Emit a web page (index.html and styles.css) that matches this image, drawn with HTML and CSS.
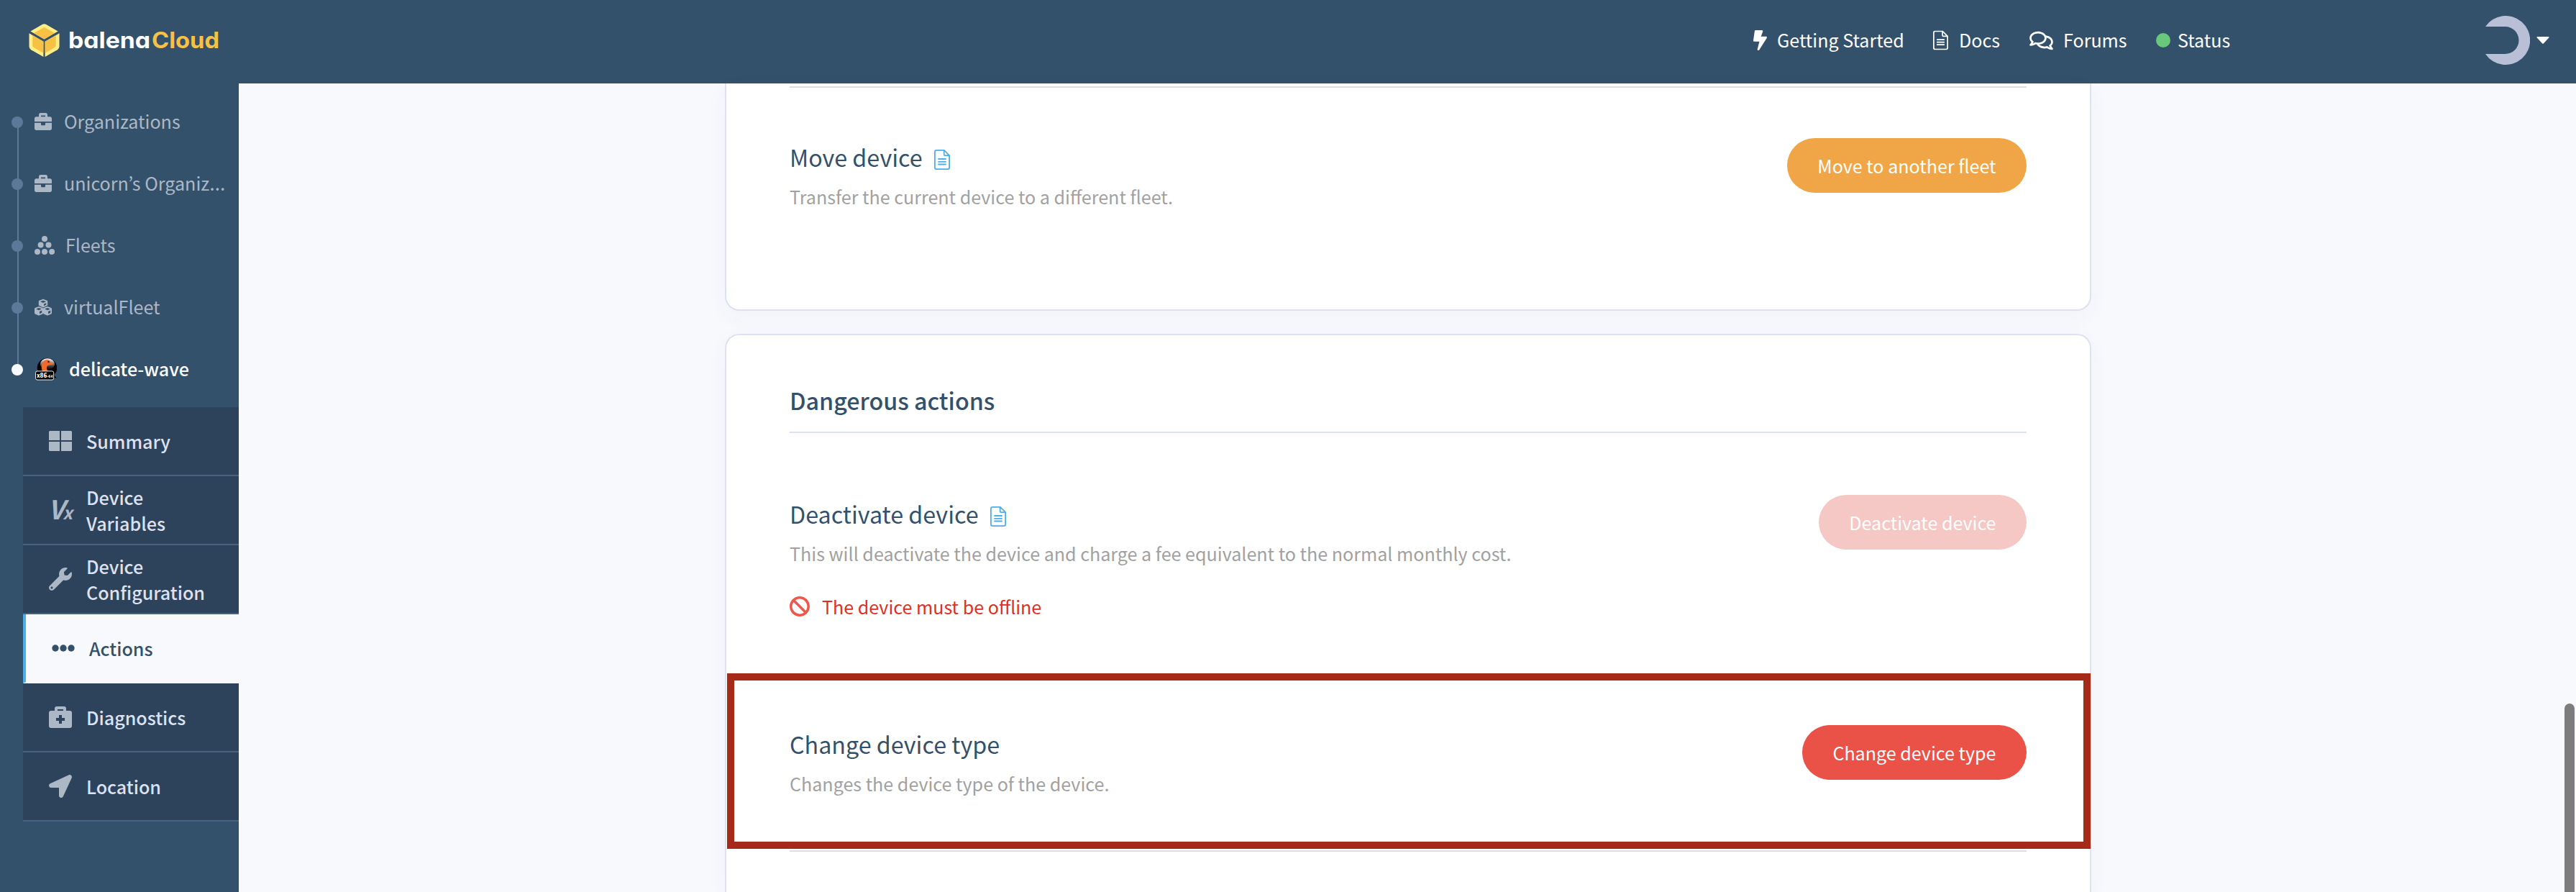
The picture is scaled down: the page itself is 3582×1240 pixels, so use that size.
FILE: index.html
```html
<!DOCTYPE html>
<html lang="en">
<head>
<meta charset="utf-8">
<title>balenaCloud - Device actions</title>
<link rel="stylesheet" href="styles.css">
</head>
<body>
<svg class="defs" aria-hidden="true">
  <symbol id="i-briefcase" viewBox="0 32 512 448" preserveAspectRatio="none"><path d="M320 336c0 8.84-7.16 16-16 16h-96c-8.84 0-16-7.16-16-16v-48H0v144c0 25.6 22.4 48 48 48h416c25.6 0 48-22.4 48-48V288H320v48zm144-208h-80V80c0-25.6-22.4-48-48-48H176c-25.6 0-48 22.4-48 48v48H48c-25.6 0-48 22.4-48 48v80h512v-80c0-25.6-22.4-48-48-48zm-144 0H192V96h128v32z"/></symbol>
  <symbol id="i-file" viewBox="0 0 22 28"><path d="M2.900.9H14L21.100 8V25.100Q21.100 27.100 19.100 27.100H2.900Q.9 27.100.9 25.100V2.900Q.9.9 2.900.9ZM13.700 1V7Q13.700 8.200 14.900 8.200H21" fill="none" stroke="currentColor" stroke-width="1.800"/><path d="M5.300 13H16.700M5.300 16.800H16.700M5.300 20.500H16.700" fill="none" stroke="currentColor" stroke-width="1.800"/></symbol>
</svg>

<header class="topbar">
  <a class="brand">
    <svg class="brand-cube" width="43" height="46" viewBox="0 0 43 46">
      <g fill="#ffed85"><path d="M18.800.9Q21.500-.5 24.200.9L40.600 10.400 21.500 21.500 2.400 10.400Z"/><path d="M.5 13.300 20.400 24.800V46L3.200 36.200Q.5 34.500.5 31.500Z"/><path d="M42.500 13.300 22.600 24.800V46L39.800 36.200Q42.500 34.500 42.500 31.500Z"/></g>
      <g fill="#f7c244"><path d="M19.500 5.900Q21.500 4.800 23.500 5.900L36 13 21.500 21.500 7 13Z"/><path d="M5.300 16 20.400 24.800V40.700L7 33Q5.300 32 5.300 30Z"/><path d="M37.700 16 22.600 24.800V40.700L36 33Q37.700 32 37.700 30Z"/></g>
    </svg>
    <svg class="brand-name" width="212" height="36" viewBox="0 0 212 36">
      <text class="name-a" x="-2" y="28" textLength="114" lengthAdjust="spacingAndGlyphs">balena</text>
      <text class="name-b" x="114" y="28" textLength="94" lengthAdjust="spacingAndGlyphs">Cloud</text>
    </svg>
  </a>
  <nav class="links">
    <a class="link link-start"><svg width="19" height="28" viewBox="0 0 320 512" preserveAspectRatio="none"><path d="M296 160H180.600l42.600-129.800C227.200 15 215.700 0 200 0H56C44 0 33.800 8.900 32.200 20.800l-32 240C-1.700 275.200 9.500 288 24 288h118.700L96.600 482.500c-3.600 15.200 8 29.500 23.300 29.500 8.400 0 16.400-4.400 20.800-12l176-304c9.300-15.900-2.200-36-20.700-36z"/></svg><span>Getting Started</span></a>
    <a class="link link-docs"><svg width="21" height="28"><use href="#i-file"/></svg><span>Docs</span></a>
    <a class="link link-forums"><svg width="33" height="29" viewBox="0 0 576 512"><path d="M532 386.200c27.500-27.100 44-61.100 44-98.200 0-80-76.500-146.100-176.200-157.900C368.300 72.500 294.300 32 208 32 93.100 32 0 103.600 0 192c0 37 16.500 71 44 98.200-15.300 30.700-37.300 54.500-37.700 54.900-6.300 6.700-8.100 16.500-4.400 25 3.600 8.500 12 14 21.200 14 53.500 0 96.700-20.200 125.200-38.800 9.200 2.100 18.700 3.700 28.400 4.900C208.100 407.600 281.800 448 368 448c20.800 0 40.800-2.400 59.800-6.800C456.300 459.700 499.400 480 553 480c9.200 0 17.500-5.500 21.200-14 3.600-8.500 1.900-18.300-4.400-25-.4-.3-22.500-24.100-37.800-54.800zm-392.800-92.300L122.100 305c-14.100 9.100-28.500 16.300-43.100 21.400 2.700-4.700 5.400-9.700 8-14.800l15.500-31.100L77.700 256C64.200 242.600 48 220.700 48 192c0-60.700 73.300-112 160-112s160 51.300 160 112-73.300 112-160 112c-16.500 0-33-1.900-49-5.600l-19.800-4.500zM498.300 352l-24.700 24.400 15.500 31.100c2.600 5.100 5.300 10.100 8 14.800-14.600-5.100-29-12.300-43.100-21.400l-17.100-11.100-19.900 4.600c-16 3.700-32.500 5.600-49 5.600-54 0-102.200-20.100-131.300-49.700C338 339.500 416 272.900 416 192c0-3.400-.4-6.700-.7-10C479.700 196.500 528 238.800 528 288c0 28.700-16.200 50.600-29.700 64z"/></svg><span>Forums</span></a>
    <a class="link link-status"><i class="status-dot"></i><span>Status</span></a>
  </nav>
  <div class="account">
    <svg width="62" height="68" viewBox="0 0 62 68"><path d="M0 15A34 34 0 1 1 0 53H27.500A19 19 0 0 0 27.500 15Z" fill="#b8bfd6"/></svg>
    <svg width="18" height="10" viewBox="0 0 18 10"><path d="M1 0H17Q18 .8 17 1.800L10 9.200Q9 10.300 8 9.200L1 1.800Q0 .8 1 0Z" fill="#fff"/></svg>
  </div>
</header>

<div class="body">
  <aside class="sidebar">
    <ul class="crumbs">
      <li class="crumb"><i class="dot"></i><svg width="24" height="24"><use href="#i-briefcase"/></svg><span>Organizations</span></li>
      <li class="crumb"><i class="dot"></i><svg width="24" height="24"><use href="#i-briefcase"/></svg><span>unicorn’s Organiz<b class="more">…</b></span></li>
      <li class="crumb crumb-fleets"><i class="dot"></i><svg width="28" height="26" viewBox="0 0 28 26"><circle cx="14" cy="4" r="4"/><circle cx="8.600" cy="12.500" r="4"/><circle cx="19.500" cy="12.500" r="4"/><circle cx="4" cy="22" r="4"/><circle cx="14" cy="22" r="4"/><circle cx="24.200" cy="22" r="4"/></svg><span>Fleets</span></li>
      <li class="crumb crumb-fleet"><i class="dot"></i><svg width="24" height="24" viewBox="0 0 24 24"><path fill-rule="evenodd" d="M12 .8 17.200 2.700Q18.200 3.100 18.200 4V9.500L12 12.500 5.800 9.500V4Q5.800 3.100 6.800 2.700ZM12 2.800 8 4.300 12 6 16 4.300ZM13 7.600V10.200L16.300 8.600V6.200Z"/><path fill-rule="evenodd" d="M6 11 11.200 13Q12 13.400 12 14.300V20Q12 21 11.200 21.400L7 23.300Q6 23.700 5 23.300L.8 21.400Q0 21 0 20V14.300Q0 13.400.8 13ZM6 13 2.200 14.500 6 16.200 9.800 14.500ZM7 18V21.300L10.200 19.800V16.600Z"/><path fill-rule="evenodd" d="M18 11 23.200 13Q24 13.400 24 14.300V20Q24 21 23.200 21.400L19 23.300Q18 23.700 17 23.300L12.800 21.400Q12 21 12 20V14.300Q12 13.400 12.800 13ZM18 13 14.200 14.500 18 16.200 21.800 14.500ZM19 18V21.300L22.200 19.800V16.600Z"/></svg><span>virtualFleet</span></li>
      <li class="crumb crumb-device"><i class="dot"></i><svg width="31" height="32" viewBox="0 0 31 32">
        <defs><linearGradient id="head" x1="0" y1="0" x2="0" y2="1"><stop offset="0" stop-color="#fff"/><stop offset=".75" stop-color="#333"/><stop offset="1" stop-color="#050505"/></linearGradient></defs>
        <circle cx="17.500" cy="14.500" r="13.800" fill="#050505"/><path d="M26 22 30.500 28.500H22Z" fill="#050505"/><ellipse cx="18" cy="9" rx="10" ry="7.800" fill="url(#head)"/>
        <path d="M11 19C8 12 10.500 4 17 3C20.500 2.500 22 6 23.500 7.600L27 9.500Q22 10.500 20 10.500C16.500 12 16 14 18.500 19Z" fill="#f16a2d"/><circle cx="19.500" cy="6" r="1.200" fill="#222"/>
        <rect x="1.500" y="18.900" width="25.200" height="12.200" rx="2.500" fill="#050505" stroke="#eee"/>
        <text x="3" y="27.800" class="chip" textLength="22.500" lengthAdjust="spacingAndGlyphs">x86<tspan class="chip-small">-64</tspan></text></svg><span>delicate-wave</span></li>
    </ul>
    <ul class="menu">
      <li class="item"><svg width="32" height="28" viewBox="0 0 32 28"><path d="M1 0H15V13H0V1ZM17 0H31L32 1V13H17ZM0 15H15V28H1L0 27ZM17 15H32V27L31 28H17Z"/></svg><span>Summary</span></li>
      <li class="item item-vars"><span class="vx">V<sub>x</sub></span><span>Device Variables</span></li>
      <li class="item"><svg width="32" height="32" viewBox="0 0 512 512"><path d="M507.730 109.100c-2.240-9.030-13.540-12.090-20.120-5.510l-74.360 74.360-67.880-11.310-11.310-67.880 74.360-74.360c6.620-6.620 3.430-17.900-5.660-20.160-47.380-11.740-99.550.91-136.580 37.930-39.640 39.640-50.550 97.100-34.050 147.200L18.740 402.760c-24.990 24.990-24.990 65.510 0 90.500 24.990 24.990 65.510 24.990 90.500 0l213.210-213.210c50.120 16.710 107.470 5.680 147.370-34.220 37.070-37.070 49.700-89.320 37.910-136.730zM64 472c-13.250 0-24-10.750-24-24 0-13.260 10.750-24 24-24s24 10.740 24 24c0 13.250-10.750 24-24 24z"/></svg><span>Device Configuration</span></li>
      <li class="item item-active"><svg width="32" height="10" viewBox="0 0 32 10"><circle cx="5" cy="5" r="4.700"/><circle cx="16" cy="5" r="4.700"/><circle cx="27" cy="5" r="4.700"/></svg><span>Actions</span></li>
      <li class="item"><svg width="32" height="30" viewBox="0 0 32 30"><path fill-rule="evenodd" d="M3 6H8V3Q8 0 11 0H21Q24 0 24 3V6H29Q32 6 32 9V27Q32 30 29 30H3Q0 30 0 27V9Q0 6 3 6ZM12 4V6H20V4ZM14 12V16H10V20H14V24H18V20H22V16H18V12Z"/></svg><span>Diagnostics</span></li>
      <li class="item"><svg width="32" height="32" viewBox="0 0 512 512"><path d="M444.520 3.520L28.740 195.420c-47.970 22.390-31.980 92.750 19.190 92.750h175.910v175.910c0 51.170 70.360 67.170 92.750 19.190l191.900-415.780c15.990-38.390-25.590-79.970-63.970-63.970z"/></svg><span>Location</span></li>
    </ul>
  </aside>

  <main class="content">
    <section class="card card-first">
      <div class="row row-move">
        <div class="info">
          <h3>Move device<svg class="doc" width="22" height="28"><use href="#i-file"/></svg></h3>
          <p>Transfer the current device to a different fleet.</p>
        </div>
        <button class="btn btn-warning">Move to another fleet</button>
      </div>
    </section>
    <section class="card card-danger">
      <h2>Dangerous actions</h2>
      <div class="row row-deactivate">
        <div class="info">
          <h3>Deactivate device<svg class="doc" width="22" height="28"><use href="#i-file"/></svg></h3>
          <p>This will deactivate the device and charge a fee equivalent to the normal monthly cost.</p>
          <div class="notice"><svg width="28" height="28" viewBox="8 8 496 496"><path d="M256 8C119.034 8 8 119.033 8 256s111.034 248 248 248 248-111.034 248-248S392.967 8 256 8zm130.108 117.892c65.448 65.448 70 165.481 20.677 235.637L150.470 105.216c70.204-49.356 170.226-44.735 235.638 20.676zM125.892 386.108c-65.448-65.448-70-165.481-20.677-235.637L361.530 406.784c-70.203 49.356-170.226 44.736-235.638-20.676z"/></svg><span>The device must be offline</span></div>
        </div>
        <button class="btn btn-disabled">Deactivate device</button>
      </div>
      <div class="row row-type">
        <div class="info">
          <h3>Change device type</h3>
          <p>Changes the device type of the device.</p>
        </div>
        <button class="btn btn-danger">Change device type</button>
      </div>
      <div class="highlight"></div>
    </section>
    <div class="scroll-thumb"></div>
  </main>
</div>
</body>
</html>
```
FILE: styles.css
```css
* { box-sizing: border-box; }

body {
  margin: 0;
  height: 1240px;
  overflow: hidden;
  display: flex;
  flex-direction: column;
  background: #f8f9fd;
  /* the Latin glyphs of this family are Source Sans */
  font-family: "Noto Sans CJK KR", "Open Sans", sans-serif;
  font-size: 25.08px;
  line-height: 36px;
  color: #34516c;
}

h2, h3, p, ul { margin: 0; padding: 0; font-weight: 400; }
ul { list-style: none; }
svg { flex: none; fill: currentColor; }
.defs { position: absolute; width: 0; height: 0; }

/* top bar */
.topbar {
  flex: none;
  height: 116px;
  display: flex;
  align-items: flex-start;
  background: #34516c;
  color: #fff;
}
.brand { display: flex; padding: 33px 0 0 40px; }
.brand-name { margin: 6px 0 0 14px; overflow: visible; }
.brand-name text {
  font-family: Inter, sans-serif;
  font-size: 31px;
  font-weight: 700;
  font-feature-settings: "cv11";
}
.name-a { fill: #fff; }
.name-b { fill: #f7c244; }
.links { display: flex; margin-left: auto; height: 112px; align-items: center; }
.link { display: flex; align-items: center; white-space: nowrap; }
.link span { padding-bottom: 3px; }
.link-start { width: 250px; gap: 14px; }
.link-docs { width: 134px; gap: 15px; }
.link-forums { width: 176px; gap: 14px; }
.link-status { width: 458px; gap: 10px; }
.status-dot { width: 20px; height: 20px; border-radius: 50%; background: #68c97c; }
.account { display: flex; align-items: center; gap: 9px; padding-top: 22px; width: 126px; }

/* sidebar */
.body { flex: 1; display: flex; min-height: 0; }
.sidebar { flex: none; width: 332px; background: #34516c; }
.crumbs {
  padding-top: 11px;
  background: linear-gradient(#5c7999, #5c7999) 24px 54px / 2px 344px no-repeat;
}
.crumb {
  height: 86px;
  padding-left: 16px;
  display: flex;
  align-items: center;
  color: #acb8c5;
  white-space: nowrap;
}
.dot { flex: none; width: 16px; height: 16px; margin-right: 16px; border-radius: 50%; background: #5c7999; }
.crumb > span { margin-left: 17px; padding-bottom: 5px; }
.crumb > svg { margin-bottom: 2px; }
.crumb-fleets > span { margin-left: 15px; }
.crumb-device { color: #fff; font-weight: 500; }
.crumb-device .dot { background: #f8f9fd; }
.more { font: 400 28px/1 "Noto Sans", sans-serif; }
.chip { font: 700 8px "DejaVu Sans", sans-serif; fill: #fff; }
.chip-small { font-size: 5px; }

.menu { margin: 9px 0 0 32px; }
.item {
  height: 96px;
  padding: 0 60px 0 36px;
  display: flex;
  align-items: center;
  gap: 20px;
  border-bottom: 2px solid #48637f;
  background: #2d435b;
  color: #dde1f0;
  font-weight: 500;
}
.item svg, .vx { color: #acb8c5; }
.item-active {
  border-left: 4px solid #4eaeea;
  border-bottom-color: #f8f9fd;
  background: #f8f9fd;
  color: #34516c;
}
.item-active svg { color: #34516c; }
.vx { flex: none; width: 32px; font: italic 700 36px/36px "Noto Sans CJK KR", sans-serif; white-space: nowrap; text-indent: -1px; }
.vx sub { margin-left: -2px; font-size: 24px; vertical-align: baseline; }

/* page content */
.content { flex: 1; display: flex; flex-direction: column; align-items: center; gap: 32px; padding-left: 2px; position: relative; }
.card {
  flex: none;
  width: 1900px;
  border: 2px solid #dde1f0;
  border-radius: 20px;
  padding: 0 88px;
  background: #fff;
  box-shadow: 0 8px 30px rgba(52, 81, 108, .04);
}
.card-first {
  height: 316px;
  border-top: 0;
  border-radius: 0 0 20px 20px;
  padding-top: 4px;
}
.row { display: flex; justify-content: space-between; align-items: flex-start; }
.row-move { border-top: 2px solid #dedede; padding-top: 70px; }
.info { padding-top: 2px; }
h3 { display: flex; align-items: center; font-size: 32.25px; line-height: 48px; }
.doc { margin: 8px 0 0 16px; color: #4eaeea; }
.info p { margin-top: 13px; color: #a1a1a1; }
.btn {
  height: 76px;
  padding: 0 42.5px;
  border: 0;
  border-radius: 38px;
  font: inherit;
  color: #fff;
}
.btn-warning { background: #f0a646; }
.btn-disabled { background: #f5c8c5; }
.btn-danger { background: #eb5247; }

/* the second card continues below the fold */
.card-danger {
  position: relative;
  flex: 1 1 0;
  min-height: 0;
  padding-top: 66px;
  border-bottom: 0;
  border-radius: 20px 20px 0 0;
}
.card-danger h2 {
  padding-bottom: 20px;
  border-bottom: 2px solid #dde1f0;
  font-size: 32.25px;
  line-height: 48px;
  font-weight: 500;
}
.row-deactivate { height: 406px; padding-top: 86px; }
.notice { display: flex; align-items: center; gap: 17px; margin-top: 38px; color: #dd3022; }
.notice svg { color: #f0574a; }
.row-type { height: 176px; border-bottom: 2px solid #dedede; }

/* annotation frame drawn over the card */
.highlight { position: absolute; left: 1px; top: 470px; width: 1896px; height: 244px; border: 10px solid #a52b18; }
.scroll-thumb { position: absolute; left: 3234px; top: 862px; bottom: 0; width: 14px; border-radius: 7px 7px 0 0; background: #7d7d7e; }
```
